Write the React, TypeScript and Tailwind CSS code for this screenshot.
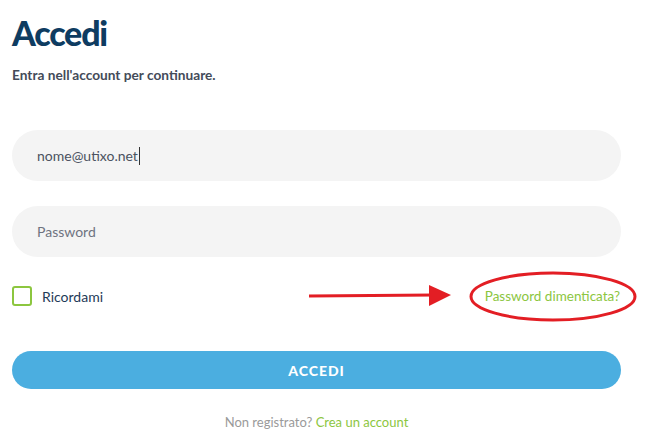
export default function App() {
  return (
    <div className="min-h-screen bg-white font-['Lato',sans-serif]">
      <div className="w-[609px] ml-3 pt-[12px]">
        <h1 className="text-[34px] leading-[42px] font-black text-[#0e3c61] tracking-[-1.2px]">Accedi</h1>
        <p className="mt-[12px] text-[13.7px] leading-[18px] font-bold text-[#444b59]">Entra nell'account per continuare.</p>

        <div className="mt-[46px] h-[51px] rounded-full bg-[#f4f4f4] flex items-center pl-[25px] text-[14px] text-[#4b5260]">
          <span>nome@utixo.net</span>
          <span className="ml-[1px] w-px h-[18px] bg-[#333]" />
        </div>

        <div className="mt-[25px] h-[51px] rounded-full bg-[#f4f4f4] flex items-center pl-[25px] text-[14px] text-[#6e7380]">
          Password
        </div>

        <div className="relative mt-[29px] flex items-center justify-between h-[20px]">
          <label className="flex items-center gap-[10px]">
            <span className="w-[20px] h-[20px] rounded-[3px] border-2 border-[#8cc63f] bg-white" />
            <span className="text-[14px] text-[#1e3a58]">Ricordami</span>
          </label>
          <a className="mr-[1px] text-[13.5px] text-[#8cc63f]">Password dimenticata?</a>

          <svg className="absolute left-[296px] top-[-4px]" width="150" height="28" viewBox="0 0 150 28">
            <line x1="1" y1="14" x2="126" y2="13" stroke="#e31e24" strokeWidth="3" />
            <polygon points="121,3 143,13 121,24" fill="#e31e24" />
          </svg>
          <svg className="absolute left-[457px] top-[-15px]" width="168" height="52" viewBox="0 0 168 52">
            <ellipse cx="84" cy="25.5" rx="82" ry="23.5" fill="none" stroke="#e31e24" strokeWidth="3" />
          </svg>
        </div>

        <button className="mt-[45px] w-full h-[38px] rounded-full bg-[#4baee0] text-white text-[14px] font-black tracking-[1px]">
          ACCEDI
        </button>

        <p className="mt-[24px] text-center text-[13px] text-[#9a9a9a]">
          Non registrato? <a className="text-[#8cc63f]">Crea un account</a>
        </p>
      </div>
    </div>
  );
}
